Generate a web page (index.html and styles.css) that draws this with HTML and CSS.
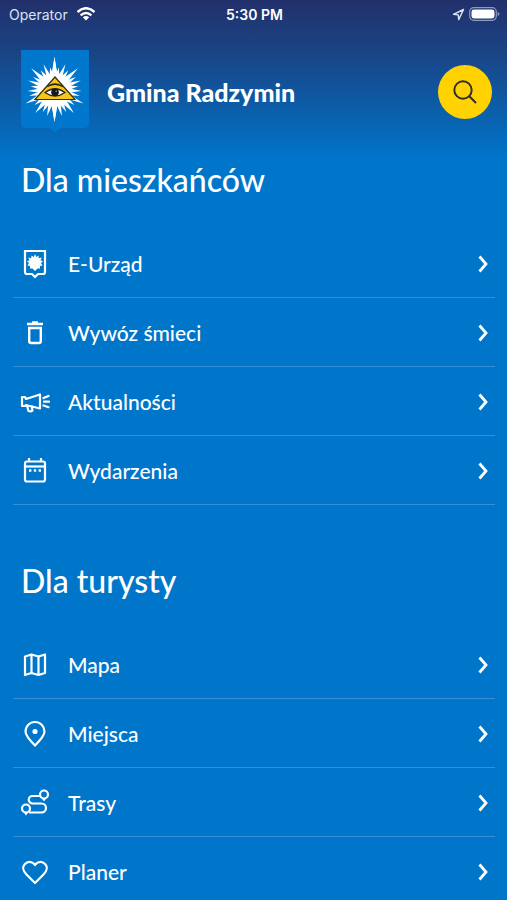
FILE: index.html
```html
<!DOCTYPE html>
<html lang="pl">

<head>
    <meta charset="UTF-8">
    <meta name="viewport" content="width=device-width, initial-scale=1">
    <title>Gmina Radzymin</title>
    <link rel="stylesheet" href="styles.css">
</head>

<body>

    <!-- shared shapes -->
    <svg class="defs" aria-hidden="true">
        <symbol id="arrow" viewBox="0 0 12 20">
            <path d="M2.500 2.500 9 10l-6.500 7.500" fill="none" stroke="currentColor" stroke-width="2.800" />
        </symbol>
    </svg>

    <!-- status bar -->
    <div class="status">
        <div class="status-left">
            <span>Operator</span>
            <svg width="20" height="14" viewBox="0 0 20 14" fill="none" stroke="#fff" stroke-width="2.400">
                <path d="M1.500 5Q10-2.600 18.500 5M4.600 8.400q5.400-4.700 10.800 0" />
                <path d="M6.800 10.200q3.200-2.600 6.400 0L10 13.600z" fill="#fff" stroke="none" />
            </svg>
        </div>
        <span class="status-time">5:30 PM</span>
        <div class="status-right">
            <svg width="13" height="13" viewBox="0 0 13 13">
                <path d="M11.500 1.500 1.500 6.300l4.700.6.500 4.700z" fill="none" stroke="#dce4f2" stroke-width="1.400" stroke-linejoin="round" />
            </svg>
            <svg width="31" height="14" viewBox="0 0 31 14">
                <rect x=".7" y=".7" width="26.600" height="12.600" rx="4" fill="none" stroke="#8c9cc0" stroke-width="1.200" />
                <rect x="2.500" y="2.500" width="23" height="9" rx="2.400" fill="#fff" />
                <path d="M28.700 4.700q1.700.7 1.700 2.300t-1.700 2.300z" fill="#8c9cc0" />
            </svg>
        </div>
    </div>

    <!-- header -->
    <header class="header">
        <svg class="crest" width="68" height="84" viewBox="0 0 68 84">
            <path d="M0 0h68v73q0 5-5 5H43q-6 0-9 5-3-5-9-5H5q-5 0-5-5z" fill="#0077cc" />
            <g transform="translate(33.500 40)" fill="#fff">
                <circle r="16.500" />
                <g id="rays">
                    <path d="M-3-14 0-33l3 19z" />
                    <path d="M-2.300-14 0-23l2.300 9z" transform="rotate(11)" />
                    <path d="M-2.300-14 0-28l2.300 14z" transform="rotate(23)" />
                    <path d="M-2.300-14 0-24l2.300 10z" transform="rotate(35)" />
                    <path d="M-2.800-14 0-32l2.800 18z" transform="rotate(47)" />
                    <path d="M-2.300-14 0-25l2.300 11z" transform="rotate(59)" />
                    <path d="M-2.300-14 0-28l2.300 14z" transform="rotate(70)" />
                    <path d="M-2.300-14 0-24l2.300 10z" transform="rotate(81)" />
                    <path d="M-2.300-14 0-27l2.300 13z" transform="rotate(92)" />
                    <path d="M-2.300-14 0-26l2.300 12z" transform="rotate(103)" />
                    <path d="M-2.800-14 0-32l2.800 18z" transform="rotate(115)" />
                    <path d="M-2.300-14 0-25l2.300 11z" transform="rotate(127)" />
                    <path d="M-2.800-14 0-30l2.800 16z" transform="rotate(140)" />
                    <path d="M-2.300-14 0-25l2.300 11z" transform="rotate(152)" />
                    <path d="M-2.300-14 0-27l2.300 13z" transform="rotate(164)" />
                    <path d="M-3-14 0-32l3 18z" transform="rotate(180)" />
                </g>
                <use href="#rays" transform="scale(-1 1)" />
            </g>
            <path d="M34 27 54 49.500H14z" fill="#f6c61c" stroke="#3a3010" stroke-width="1.200" />
            <path d="M25.500 37.500q8.500-5 17 0l-2-2.500q-6.500-3.500-13 0z" fill="#2a2410" />
            <path d="M24 42.500q10-7.500 20 0-10 7-20 0z" fill="#fff" stroke="#2a2410" stroke-width="1.300" />
            <circle cx="34" cy="42.300" r="3.800" fill="#16181c" />
            <circle cx="35.200" cy="41.300" r=".8" fill="#aaa" />
        </svg>
        <h1 class="title">Gmina Radzymin</h1>
        <button class="search" type="button" aria-label="Szukaj">
            <svg width="54" height="54" viewBox="0 0 54 54" fill="none" stroke="#30302a" stroke-width="2">
                <circle cx="25" cy="25" r="8.700" />
                <path d="m31.300 31.300 6.700 6.700" />
            </svg>
        </button>
    </header>

    <main>
        <section class="group">
            <h2 class="group-title">Dla mieszkańców</h2>
            <ul class="menu">
                <li>
                    <a href="#" class="item">
                        <svg class="icon" viewBox="0 0 30 30" fill="none" stroke="#fff" stroke-width="2.200">
                            <path d="M5 2h20v21q0 2-2 2h-5l-3 3-3-3H7q-2 0-2-2z" />
                            <path d="m15 5 1.200 3 2.300-1.500.3 2.700 3-.7-1.300 2.800 2.500 1-2 1.700 1.500 2.500-2.500.5v2.500h-2.500L15 22l-2.500-2.500H10V17l-2.500-.5L9 14l-2-1.700 2.500-1-1.300-2.800 3 .7.3-2.700L13.800 8z" fill="#fff" stroke="none" />
                        </svg>
                        <span class="label">E-Urząd</span>
                        <svg class="arrow"><use href="#arrow" /></svg>
                    </a>
                </li>
                <li>
                    <a href="#" class="item">
                        <svg class="icon" viewBox="0 0 30 30" fill="none" stroke="#fff" stroke-width="2.400">
                            <path d="M7 6h16M12 4.500h6" />
                            <path d="M9.200 10h11.600v13q0 2-2 2h-7.600q-2 0-2-2z" />
                        </svg>
                        <span class="label">Wywóz śmieci</span>
                        <svg class="arrow"><use href="#arrow" /></svg>
                    </a>
                </li>
                <li>
                    <a href="#" class="item">
                        <svg class="icon" viewBox="0 0 30 30" fill="none" stroke="#fff" stroke-width="2.200" stroke-linejoin="round" stroke-linecap="round">
                            <path d="M2 10h3l1 2 14-4.500v14L12 19.500q-.5 1.500.5 4-1.500 1.500-4 .500l-1.500-5.500-1-.5-1 1H2z" />
                            <path d="M7.500 18.500 12 19.500M23.500 11l5-2M24 14.700h5M23.500 18.500l5 1.700" />
                        </svg>
                        <span class="label">Aktualności</span>
                        <svg class="arrow"><use href="#arrow" /></svg>
                    </a>
                </li>
                <li>
                    <a href="#" class="item">
                        <svg class="icon" viewBox="0 0 30 30" fill="none" stroke="#fff" stroke-width="2.200">
                            <rect x="5" y="5.500" width="20" height="20" rx="2" />
                            <path d="M9 2v4M21 2v4" />
                            <path d="M5 10.500h20" />
                            <path d="M9 14.500h2.400M13.800 14.500h2.400M18.600 14.500H21" stroke-width="2.400" />
                        </svg>
                        <span class="label">Wydarzenia</span>
                        <svg class="arrow"><use href="#arrow" /></svg>
                    </a>
                </li>
            </ul>
        </section>

        <section class="group">
            <h2 class="group-title">Dla turysty</h2>
            <ul class="menu">
                <li>
                    <a href="#" class="item">
                        <svg class="icon" viewBox="0 0 30 30" fill="none" stroke="#fff" stroke-width="2.200" stroke-linejoin="round">
                            <path d="M5 6.500 11.500 4.500l7 2 6.500-2v18.500l-6.500 2-7-2L5 25z" />
                            <path d="M11.500 4.500V23M18.500 6.500V25" />
                        </svg>
                        <span class="label">Mapa</span>
                        <svg class="arrow"><use href="#arrow" /></svg>
                    </a>
                </li>
                <li>
                    <a href="#" class="item">
                        <svg class="icon" viewBox="0 0 30 30" fill="none" stroke="#fff" stroke-width="2.200">
                            <path d="M15 26.500Q5.500 17 5.500 12.500a9.500 9.500 0 0 1 19 0Q24.500 17 15 26.500z" />
                            <circle cx="15" cy="12.500" r="2.600" fill="#fff" stroke="none" />
                        </svg>
                        <span class="label">Miejsca</span>
                        <svg class="arrow"><use href="#arrow" /></svg>
                    </a>
                </li>
                <li>
                    <a href="#" class="item">
                        <svg class="icon" viewBox="0 0 30 30" fill="none" stroke="#fff" stroke-width="2.200" stroke-linejoin="round">
                            <circle cx="24" cy="6.500" r="4" />
                            <circle cx="6" cy="20.500" r="4" />
                            <path d="m21.500 10 2.500 3.500 2.500-3.500zM3.500 24 6 27.500 8.500 24z" fill="#fff" stroke="none" />
                            <path d="M20 8h-7.500a3.700 3.700 0 0 0 0 7.500h9a4.500 4.500 0 0 1 0 9H9" />
                        </svg>
                        <span class="label">Trasy</span>
                        <svg class="arrow"><use href="#arrow" /></svg>
                    </a>
                </li>
                <li>
                    <a href="#" class="item">
                        <svg class="icon" viewBox="0 0 30 30" fill="none" stroke="#fff" stroke-width="2.200" stroke-linejoin="round">
                            <path d="M15 26 6.500 17.500C2.500 13.500 2.500 9.500 4.700 7.200 7.500 4.200 12.500 4 15 8c2.500-4 7.500-3.800 10.300-.8 2.200 2.300 2.200 6.300-1.800 10.300z" />
                        </svg>
                        <span class="label">Planer</span>
                        <svg class="arrow"><use href="#arrow" /></svg>
                    </a>
                </li>
            </ul>
        </section>
    </main>

</body>

</html>
```
FILE: styles.css
```css
* {
    padding: 0;
    margin: 0;
    box-sizing: border-box;
}

body {
    background: #0076cb linear-gradient(#22306b 0, #1b4283 48px, #0d5ba6 104px, #0076cb 160px) no-repeat;
    color: #fff;
    font-family: Lato, "Liberation Sans", sans-serif;
}

.defs {
    display: none;
}

.status {
    display: grid;
    grid-template-columns: 1fr auto 1fr;
    align-items: center;
    height: 28px;
    padding: 0 7px 0 9px;
    font: 14px Inter, "Liberation Sans", sans-serif;
}

.status-left,
.status-right {
    display: flex;
    align-items: center;
    gap: 8px;
    color: #dce4f2;
}

.status-right {
    justify-content: flex-end;
    gap: 4px;
}

.status-time {
    font-weight: 600;
}

.header {
    display: flex;
    align-items: center;
    height: 128px;
    padding: 0 15px 0 21px;
}

.title {
    flex: 1;
    margin-left: 18px;
    font-size: 25px;
    font-weight: 900;
}

.search {
    width: 54px;
    height: 54px;
    border: 0;
    border-radius: 50%;
    background: #ffd200;
    cursor: pointer;
}

.search svg {
    display: block;
}

.group {
    padding: 0 12px 52px 13px;
}

.group-title {
    height: 73px;
    padding-left: 8px;
    font-size: 32px;
    font-weight: 500;
    line-height: 48px;
}

.menu {
    list-style: none;
}

.item {
    display: flex;
    align-items: center;
    height: 69px;
    padding: 1px 6px 0 7px;
    border-bottom: 1px solid #3390d6;
    color: #fff;
    font-size: 21px;
    font-weight: 500;
    text-decoration: none;
}

.icon {
    width: 30px;
    height: 30px;
}

.label {
    flex: 1;
    margin-left: 18px;
}

.arrow {
    width: 12px;
    height: 20px;
}
```
